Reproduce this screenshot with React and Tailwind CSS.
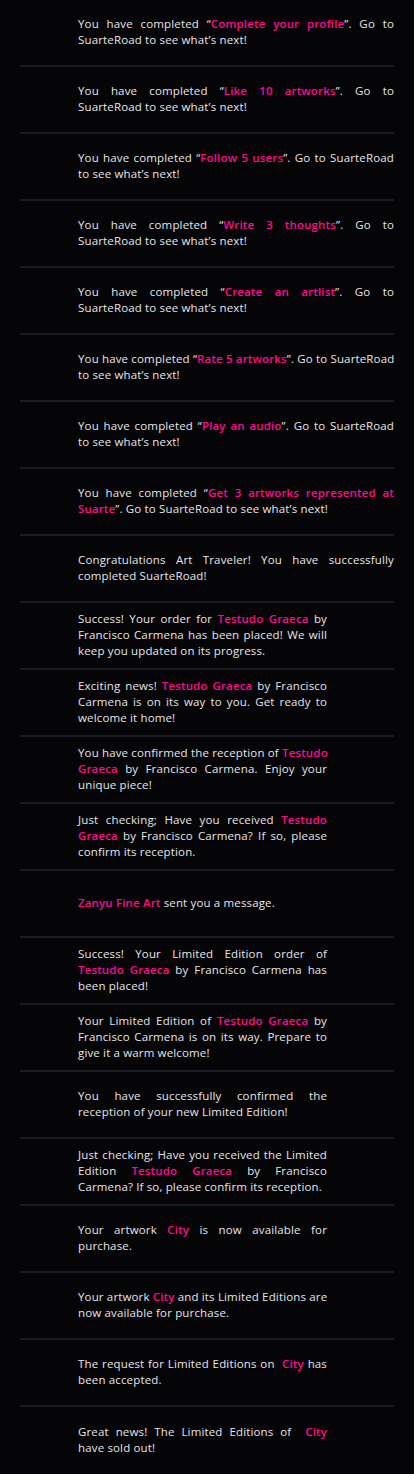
import React from "react";

const P = ({ children }) => (
  <span className="font-semibold text-[#ff0a8f]">{children}</span>
);

const rows = [
  { wide: true, lines: [<>You have completed “<P>Complete your profile</P>”. Go to</>, <>SuarteRoad to see what’s next!</>] },
  { wide: true, lines: [<>You have completed “<P>Like 10 artworks</P>”. Go to</>, <>SuarteRoad to see what’s next!</>] },
  { wide: true, lines: [<>You have completed “<P>Follow 5 users</P>”. Go to SuarteRoad</>, <>to see what’s next!</>] },
  { wide: true, lines: [<>You have completed “<P>Write 3 thoughts</P>”. Go to</>, <>SuarteRoad to see what’s next!</>] },
  { wide: true, lines: [<>You have completed “<P>Create an artlist</P>”. Go to</>, <>SuarteRoad to see what’s next!</>] },
  { wide: true, lines: [<>You have completed “<P>Rate 5 artworks</P>”. Go to SuarteRoad</>, <>to see what’s next!</>] },
  { wide: true, lines: [<>You have completed “<P>Play an audio</P>”. Go to SuarteRoad</>, <>to see what’s next!</>] },
  { wide: true, lines: [<>You have completed “<P>Get 3 artworks represented at</P></>, <><P>Suarte</P>”. Go to SuarteRoad to see what’s next!</>] },
  { wide: true, lines: [<>Congratulations Art Traveler! You have successfully</>, <>completed SuarteRoad!</>] },
  { wide: false, lines: [<>Success! Your order for <P>Testudo Graeca</P> by</>, <>Francisco Carmena has been placed! We will</>, <>keep you updated on its progress.</>] },
  { wide: false, lines: [<>Exciting news! <P>Testudo Graeca</P> by Francisco</>, <>Carmena is on its way to you. Get ready to</>, <>welcome it home!</>] },
  { wide: false, lines: [<>You have confirmed the reception of <P>Testudo</P></>, <><P>Graeca</P> by Francisco Carmena. Enjoy your</>, <>unique piece!</>] },
  { wide: false, lines: [<>Just checking; Have you received <P>Testudo</P></>, <><P>Graeca</P> by Francisco Carmena? If so, please</>, <>confirm its reception.</>] },
  { wide: false, lines: [<><P>Zanyu Fine Art</P> sent you a message.</>] },
  { wide: false, lines: [<>Success! Your Limited Edition order of</>, <><P>Testudo Graeca</P> by Francisco Carmena has</>, <>been placed!</>] },
  { wide: false, lines: [<>Your Limited Edition of <P>Testudo Graeca</P> by</>, <>Francisco Carmena is on its way. Prepare to</>, <>give it a warm welcome!</>] },
  { wide: false, lines: [<>You have successfully confirmed the</>, <>reception of your new Limited Edition!</>] },
  { wide: false, lines: [<>Just checking; Have you received the Limited</>, <>Edition <P>Testudo Graeca</P> by Francisco</>, <>Carmena? If so, please confirm its reception.</>] },
  { wide: false, lines: [<>Your artwork <P>City</P> is now available for</>, <>purchase.</>] },
  { wide: false, lines: [<>Your artwork <P>City</P> and its Limited Editions are</>, <>now available for purchase.</>] },
  { wide: false, lines: [<>The request for Limited Editions on{"\u00a0 "}<P>City</P> has</>, <>been accepted.</>] },
  { wide: false, lines: [<>Great news! The Limited Editions of{"\u00a0 "}<P>City</P></>, <>have sold out!</>] },
];

export default function App() {
  return (
    <div className="min-h-[1474px] w-[414px] bg-[#050407] font-['Open_Sans',sans-serif] text-[11.5px] leading-4 tracking-[0.15px] text-[#e6e6e8]">
      {rows.map((r, i) => (
        <div
          key={i}
          className="mx-5 flex h-[67px] items-center gap-3 border-b-2 border-[#1b1a23] pb-[2px] last:border-b-0"
        >
          <div className="w-[46px] shrink-0" />
          <div className={r.wide ? "flex-1" : "w-[249px]"}>
            {r.lines.map((l, j) => (
              <span
                key={j}
                className={
                  j < r.lines.length - 1
                    ? "block whitespace-nowrap text-justify [text-align-last:justify]"
                    : "block whitespace-nowrap text-left"
                }
              >
                {l}
              </span>
            ))}
          </div>
        </div>
      ))}
    </div>
  );
}
